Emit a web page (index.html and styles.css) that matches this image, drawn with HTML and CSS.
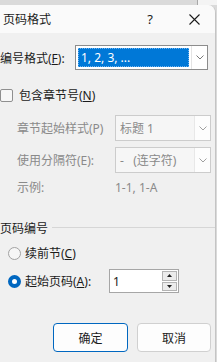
FILE: index.html
```html
<!DOCTYPE html>
<html lang="zh-CN">
<head>
    <meta charset="UTF-8">
    <title>页码格式</title>
    <link rel="stylesheet" href="styles.css">
</head>
<body>
    <div class="backdrop"><div class="back-window"></div></div>

    <div class="dialog">
        <header class="titlebar">
            <span class="title">页码格式</span>
            <span class="help">?</span>
            <span class="close">
                <svg width="11" height="11" viewBox="0 0 11 11"><path d="M0.5 0.5L10.5 10.5M10.5 0.5L0.5 10.5" stroke="#1b1b1b" stroke-width="1.1" fill="none"/></svg>
            </span>
        </header>

        <main class="content">
            <div class="row row-format">
                <label class="label">编号格式(<u>F</u>):</label>
                <div class="combo combo-main">
                    <div class="combo-value"><span class="selected">1, 2, 3, ...</span></div>
                    <div class="combo-arrow">
                        <svg width="8" height="5" viewBox="0 0 8 5"><path d="M0.5 0.5L4 4L7.5 0.5" stroke="#7a7a7a" fill="none"/></svg>
                    </div>
                </div>
            </div>

            <div class="row row-check">
                <span class="checkbox"></span>
                <span>包含章节号(<u>N</u>)</span>
            </div>

            <div class="row row-sub row-style">
                <span class="sub-label">章节起始样式(P)</span>
                <div class="combo combo-off">
                    <div class="combo-value">标题 1</div>
                    <div class="combo-arrow">
                        <svg width="8" height="5" viewBox="0 0 8 5"><path d="M0.5 0.5L4 4L7.5 0.5" stroke="#a0a0a0" fill="none"/></svg>
                    </div>
                </div>
            </div>

            <div class="row row-sub row-sep">
                <span class="sub-label">使用分隔符(E):</span>
                <div class="combo combo-off">
                    <div class="combo-value">-&nbsp;&nbsp;&nbsp;(连字符)</div>
                    <div class="combo-arrow">
                        <svg width="8" height="5" viewBox="0 0 8 5"><path d="M0.5 0.5L4 4L7.5 0.5" stroke="#a0a0a0" fill="none"/></svg>
                    </div>
                </div>
            </div>

            <div class="row row-sub row-example">
                <span class="sub-label">示例:</span>
                <span class="example">1-1, 1-A</span>
            </div>

            <div class="row row-group">
                <span>页码编号</span>
                <span class="group-line"></span>
            </div>

            <div class="row row-radio row-continue">
                <span class="radio"></span>
                <span>续前节(<u>C</u>)</span>
            </div>

            <div class="row row-radio row-start">
                <span class="radio radio-on"></span>
                <span class="start-label">起始页码(<u>A</u>):</span>
                <div class="spin">
                    <div class="spin-value">1</div>
                    <div class="spin-buttons">
                        <span class="spin-btn">
                            <svg width="5" height="3" viewBox="0 0 5 3"><path d="M0 3L2.5 0L5 3Z" fill="#222"/></svg>
                        </span>
                        <span class="spin-btn">
                            <svg width="5" height="3" viewBox="0 0 5 3"><path d="M0 0L2.5 3L5 0Z" fill="#222"/></svg>
                        </span>
                    </div>
                </div>
            </div>

            <div class="buttons">
                <button class="btn btn-default">确定</button>
                <button class="btn">取消</button>
            </div>
        </main>
    </div>
</body>
</html>
```

FILE: styles.css
```css
:root {
    --dialog-bg: #f0f0f0;
    --text: #1b1b1b;
    --muted: #8a8a8a;
    --accent: #0067c0;
    --select: #0078d7;
}

* {
    margin: 0;
    padding: 0;
    box-sizing: border-box;
}

body {
    width: 217px;
    height: 362px;
    overflow: hidden;
    background: #dadada;
    font-family: "Noto Sans", "Noto Sans CJK SC", sans-serif;
    font-size: 12px;
    color: var(--text);
}

.backdrop {
    height: 5px;
    display: flex;
}

.back-window {
    margin-left: 197px;
    flex: 1;
    border-left: 1px solid #a8a8a8;
    background: #f4f4f4;
}

.dialog {
    width: 216px;
    height: 357px;
    background: var(--dialog-bg);
    border-right: 1px solid #c4c4c4;
    border-top-right-radius: 8px;
    overflow: hidden;
}

.titlebar {
    height: 28px;
    background: #fafafa;
    display: flex;
    align-items: center;
}

.title {
    padding-left: 3px;
    flex: 1;
}

.help {
    width: 12px;
    text-align: center;
    margin-right: 33px;
    font-size: 13px;
}

.close {
    display: flex;
    margin-right: 15px;
}

.content {
    display: flex;
    flex-direction: column;
}

.row {
    display: flex;
    align-items: center;
    white-space: nowrap;
}

.row-format {
    height: 25px;
    margin-top: 12px;
}

.label {
    width: 75px;
}

u {
    text-decoration-thickness: 1px;
    text-underline-offset: 1px;
}

.combo {
    display: flex;
    height: 100%;
    border: 1px solid #8c8c8c;
    background: #fff;
}

.combo-main {
    width: 133px;
}

.combo-value {
    flex: 1;
    display: flex;
    align-items: center;
    padding: 2px;
}

.selected {
    width: 100%;
    height: 100%;
    background: var(--select);
    color: #fff;
    border: 1px dotted #6fb4f0;
    padding-left: 2px;
    display: flex;
    align-items: center;
}

.combo-arrow {
    width: 16px;
    display: flex;
    align-items: center;
    justify-content: center;
    border-left: 1px solid #e4e4e4;
}

.row-check {
    height: 16px;
    margin-top: 17px;
    gap: 6px;
}

.checkbox {
    width: 13px;
    height: 13px;
    border: 1px solid #8f8f8f;
    border-radius: 2px;
    background: #f7f7f7;
}

.row-sub {
    padding-left: 17px;
    color: var(--muted);
}

.row-style {
    height: 26px;
    margin-top: 12px;
}

.row-sep {
    height: 26px;
    margin-top: 6px;
}

.sub-label {
    width: 98px;
}

.combo-off {
    width: 96px;
    border-color: #cccccc;
    background: #f6f6f6;
}

.combo-off .combo-value {
    padding-left: 4px;
}

.combo-off .combo-arrow {
    background: #fdfdfd;
    border-left-color: #e8e8e8;
}

.row-example {
    height: 16px;
    margin-top: 6px;
}

.row-group {
    height: 16px;
    margin-top: 25px;
    gap: 4px;
}

.group-line {
    flex: 1;
    height: 1px;
    margin-top: -1px;
    background: #d6d6d6;
}

.row-radio {
    padding-left: 8px;
    gap: 4px;
}

.row-continue {
    height: 16px;
    margin-top: 9px;
}

.row-start {
    height: 24px;
    margin-top: 8px;
}

.radio {
    width: 13px;
    height: 13px;
    border-radius: 50%;
    border: 1px solid #a2a2a2;
    background: #f6f6f6;
}

.radio-on {
    border: 4px solid var(--accent);
    background: #fff;
}

.start-label {
    width: 80px;
}

.spin {
    width: 70px;
    height: 100%;
    display: flex;
    border: 1px solid #a6a6a6;
    background: #fff;
}

.spin-value {
    flex: 1;
    padding-left: 3px;
    display: flex;
    align-items: center;
}

.spin-buttons {
    width: 16px;
    display: flex;
    flex-direction: column;
    gap: 1px;
    padding: 1px 1px 1px 0;
}

.spin-btn {
    flex: 1;
    display: flex;
    align-items: center;
    justify-content: center;
    background: #ececec;
    border: 1px solid #b4b4b4;
}

.buttons {
    display: flex;
    gap: 9px;
    margin-top: 30px;
    padding-left: 53px;
}

.btn {
    width: 74px;
    height: 29px;
    border: 1px solid #d0d0d0;
    border-radius: 4px;
    background: #fdfdfd;
    font-family: inherit;
    font-size: 12px;
    color: var(--text);
}

.btn-default {
    width: 75px;
    border-color: var(--accent);
}
```
